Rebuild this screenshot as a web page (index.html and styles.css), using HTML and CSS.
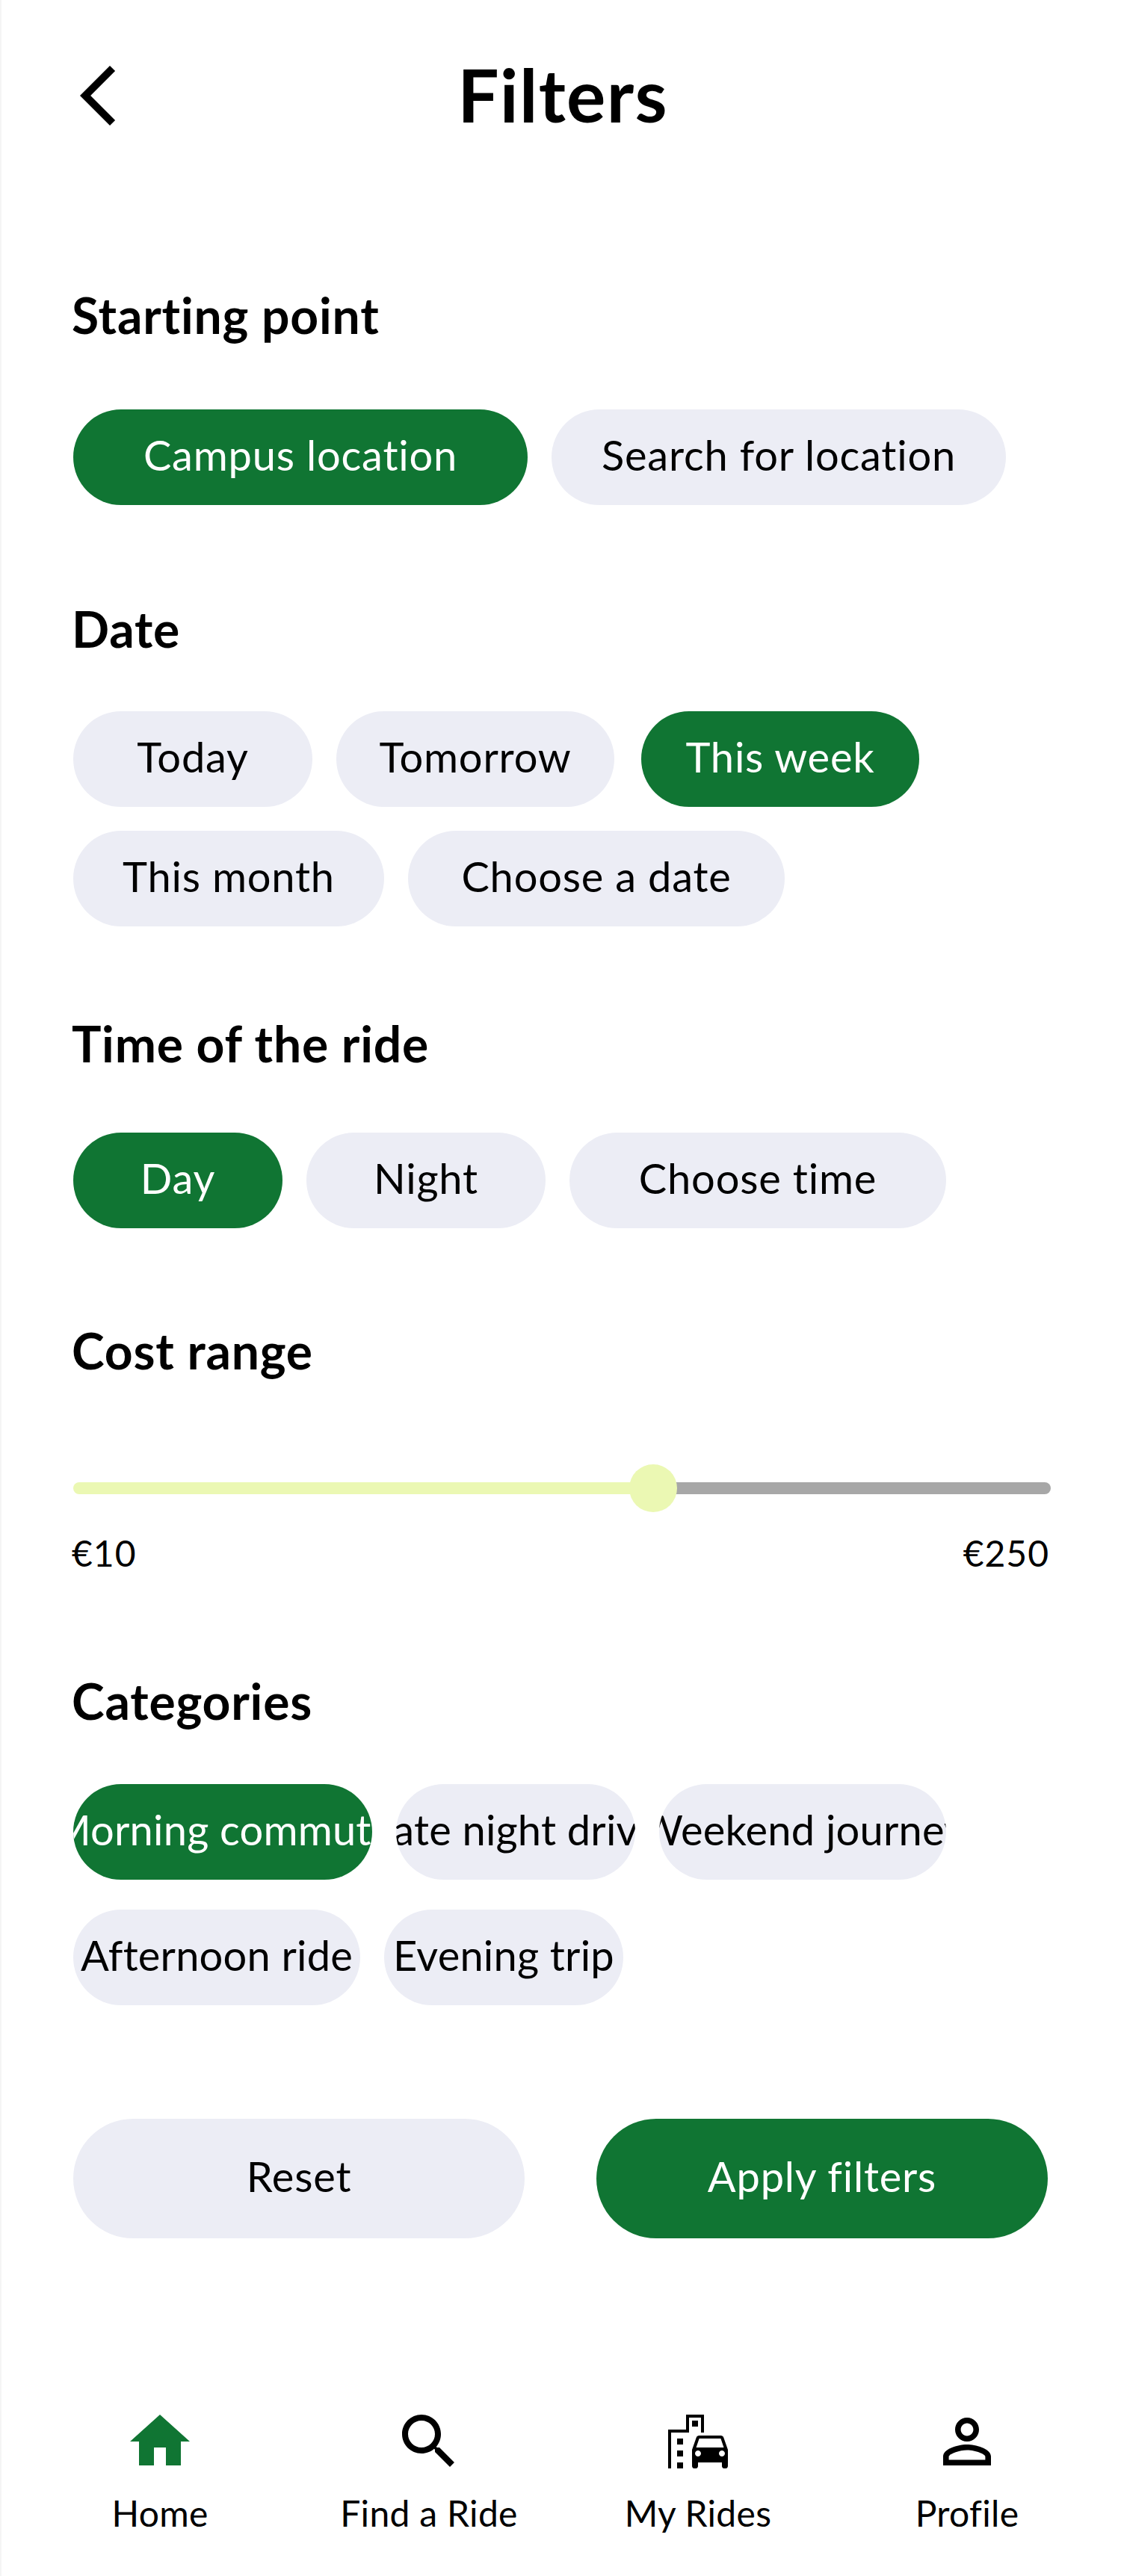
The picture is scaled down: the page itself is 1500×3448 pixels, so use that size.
FILE: index.html
```html
<!DOCTYPE html>
<html lang="en">
<head>
    <meta charset="UTF-8">
    <meta name="viewport" content="width=device-width, initial-scale=1.0">
    <title>Filters</title>
    <link rel="stylesheet" href="styles.css">
</head>
<body>
    <div class="screen">
        <div class="header">
            <svg class="icon" viewBox="0 0 24 24"><path d="M17.77 3.77L16 2 6 12l10 10 1.77-1.77L9.54 12z"/></svg>
            <h1>Filters</h1>
        </div>

        <h2 class="title-start">Starting point</h2>
        <div class="pills pills-start">
            <div class="pill on w608"><span>Campus location</span></div>
            <div class="pill w608"><span>Search for location</span></div>
        </div>

        <h2 class="title-date">Date</h2>
        <div class="pills pills-date">
            <div class="pill w320"><span>Today</span></div>
            <div class="pill w372"><span>Tomorrow</span></div>
            <div class="pill on w372 push"><span>This week</span></div>
            <div class="pill w416"><span>This month</span></div>
            <div class="pill w504"><span>Choose a date</span></div>
        </div>

        <h2 class="title-time">Time of the ride</h2>
        <div class="pills pills-time">
            <div class="pill on w280"><span>Day</span></div>
            <div class="pill w320"><span>Night</span></div>
            <div class="pill w504"><span>Choose time</span></div>
        </div>

        <h2 class="title-cost">Cost range</h2>
        <div class="slider">
            <div class="slider-fill"></div>
            <div class="slider-rest"></div>
            <div class="slider-thumb"></div>
        </div>
        <div class="slider-labels">
            <span>€10</span>
            <span>€250</span>
        </div>

        <h2 class="title-cat">Categories</h2>
        <div class="pills pills-cat">
            <div class="pill on w400"><span>Morning commute</span></div>
            <div class="pill w320"><span>Late night drive</span></div>
            <div class="pill w384"><span>Weekend journey</span></div>
            <div class="pill w384"><span>Afternoon ride</span></div>
            <div class="pill w320"><span>Evening trip</span></div>
        </div>

        <div class="actions">
            <div class="btn">Reset</div>
            <div class="btn on">Apply filters</div>
        </div>

        <div class="nav">
            <div class="nav-item">
                <svg class="icon green" viewBox="0 0 24 24"><path d="M10 20v-6h4v6h5v-8h3L12 3 2 12h3v8z"/></svg>
                <span>Home</span>
            </div>
            <div class="nav-item">
                <svg class="icon" viewBox="0 0 24 24"><path d="M15.5 14h-.79l-.28-.27C15.41 12.59 16 11.11 16 9.5 16 5.91 13.09 3 9.5 3S3 5.91 3 9.5 5.91 16 9.5 16c1.61 0 3.09-.59 4.23-1.57l.27.28v.79l5 4.99L20.49 19l-4.99-5zm-6 0C7.01 14 5 11.99 5 9.5S7.01 5 9.5 5 14 7.01 14 9.5 11.99 14 9.5 14z"/></svg>
                <span>Find a Ride</span>
            </div>
            <div class="nav-item">
                <svg class="icon" viewBox="0 0 24 24"><path d="M20.57 10.66C20.43 10.26 20.05 10 19.6 10h-7.19c-.46 0-.83.26-.98.66L10 14.77l.01 5.51c0 .38.31.72.69.72h.62c.38 0 .68-.38.68-.76V19h8v1.24c0 .38.31.76.69.76h.61c.38 0 .69-.34.69-.72l.01-1.37v-4.14l-1.43-4.11zm-8.16.34h7.19l1.03 3h-9.25l1.03-3zM12 17c-.55 0-1-.45-1-1s.45-1 1-1 1 .45 1 1-.45 1-1 1zm8 0c-.55 0-1-.45-1-1s.45-1 1-1 1 .45 1 1-.45 1-1 1zM14 3H8v5H2v13h1V9h6V4h4v5h1zM5 11h2v2H5zm5-6h2v2h-2zM5 15h2v2H5zm0 4h2v2H5z"/></svg>
                <span>My Rides</span>
            </div>
            <div class="nav-item">
                <svg class="icon" viewBox="0 0 24 24"><path d="M12 5.9c1.16 0 2.1.94 2.1 2.1s-.94 2.1-2.1 2.1S9.9 9.16 9.9 8s.94-2.1 2.1-2.1m0 9c2.97 0 6.1 1.46 6.1 2.1v1.1H5.9V17c0-.64 3.13-2.1 6.1-2.1M12 4C9.79 4 8 5.79 8 8s1.79 4 4 4 4-1.79 4-4-1.79-4-4-4zm0 9c-2.67 0-8 1.34-8 4v3h16v-3c0-2.66-5.33-4-8-4z"/></svg>
                <span>Profile</span>
            </div>
        </div>
    </div>
</body>
</html>
```

FILE: styles.css
```css
*{margin: 0;padding: 0;box-sizing: border-box;}
body{background: #fff;color: #000;font-family: "Lato", "Noto Sans", sans-serif;font-variant-ligatures: none;}

.screen{width: 1500px;height: 3448px;padding-top: 80px;border-left: 2px solid #f5f5f5;overflow: hidden;}
.icon{display: block;width: 96px;height: 96px;fill: #000;flex: none;}
.green{fill: #107533;}

.header{display: grid;grid-template-columns: 96px 1fr 96px;align-items: center;padding: 0 77px 0 81px;}
.header h1{font-size: 98px;line-height: 92px;padding-bottom: 4px;font-weight: 700;text-align: center;letter-spacing: 1.3px;}

h2{margin-left: 94px;font-size: 66px;line-height: 84px;font-weight: 700;letter-spacing: .8px;}
.title-start{margin-top: 204px;}
.title-date{margin-top: 124px;}
.title-time{margin-top: 115px;}
.title-cost{margin-top: 122px;}
.title-cat{margin-top: 124px;}

.pills{display: flex;flex-wrap: wrap;gap: 32px;margin-left: 96px;width: 1300px;}
.pills-start{margin-top: 84px;}
.pills-date{margin-top: 68px;}
.pills-time{margin-top: 77px;}
.pills-cat{margin-top: 69px;row-gap: 40px;}

.pill{height: 128px;padding-bottom: 8px;border-radius: 64px;background: #ecedf5;font-size: 56px;letter-spacing: .8px;display: flex;align-items: center;justify-content: center;overflow: hidden;white-space: nowrap;}
.pills-cat .pill{letter-spacing: .2px;}
.pill span{flex: none;}
.push{margin-left: 4px;}
.w280{width: 280px;}
.w320{width: 320px;}
.w372{width: 372px;}
.w384{width: 384px;}
.w400{width: 400px;}
.w416{width: 416px;}
.w504{width: 504px;}
.w608{width: 608px;}

.slider{position: relative;display: flex;width: 1308px;height: 16px;margin: 134px 0 0 96px;}
.slider-fill{width: 770px;background: #ebf8b3;border-radius: 8px 0 0 8px;}
.slider-rest{flex: 1;background: #a7a7a7;border-radius: 0 8px 8px 0;}
.slider-thumb{position: absolute;left: 744px;top: -24px;width: 64px;height: 64px;border-radius: 50%;background: #ebf8b3;}
.slider-labels{display: flex;justify-content: space-between;width: 1308px;margin: 47px 0 0 94px;font-size: 48px;line-height: 64px;letter-spacing: 1px;}

.actions{display: flex;justify-content: space-between;width: 1304px;margin: 152px 0 0 96px;}
.btn{width: 604px;height: 160px;padding-bottom: 8px;border-radius: 80px;background: #ecedf5;font-size: 56px;letter-spacing: .8px;display: flex;align-items: center;justify-content: center;}
.on{background: #107533;color: #fff;}

.nav{display: grid;grid-template-columns: repeat(4, 360px);margin: 224px 0 0 32px;}
.nav-item{display: flex;flex-direction: column;align-items: center;font-size: 48px;line-height: 64px;letter-spacing: .3px;}
.nav-item span{margin-top: 16px;}
```
